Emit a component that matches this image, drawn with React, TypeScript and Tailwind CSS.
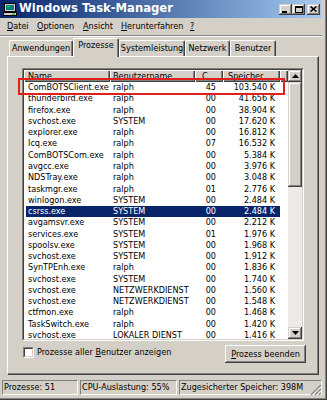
import React from "react";

type Row = [string, string, string, string];

const rows: Row[] = [
  ["ComBOTSClient.exe", "ralph", "45", "103.540 K"],
  ["thunderbird.exe", "ralph", "00", "41.656 K"],
  ["firefox.exe", "ralph", "00", "38.904 K"],
  ["svchost.exe", "SYSTEM", "00", "17.620 K"],
  ["explorer.exe", "ralph", "00", "16.812 K"],
  ["Icq.exe", "ralph", "07", "16.532 K"],
  ["ComBOTSCom.exe", "ralph", "00", "5.384 K"],
  ["avgcc.exe", "ralph", "00", "3.976 K"],
  ["NDSTray.exe", "ralph", "00", "3.048 K"],
  ["taskmgr.exe", "ralph", "01", "2.776 K"],
  ["winlogon.exe", "SYSTEM", "00", "2.484 K"],
  ["csrss.exe", "SYSTEM", "00", "2.484 K"],
  ["avgamsvr.exe", "SYSTEM", "00", "2.212 K"],
  ["services.exe", "SYSTEM", "01", "1.976 K"],
  ["spoolsv.exe", "SYSTEM", "00", "1.968 K"],
  ["svchost.exe", "SYSTEM", "00", "1.912 K"],
  ["SynTPEnh.exe", "ralph", "00", "1.836 K"],
  ["svchost.exe", "SYSTEM", "00", "1.740 K"],
  ["svchost.exe", "NETZWERKDIENST", "00", "1.560 K"],
  ["svchost.exe", "NETZWERKDIENST", "00", "1.548 K"],
  ["ctfmon.exe", "ralph", "00", "1.468 K"],
  ["TaskSwitch.exe", "ralph", "00", "1.420 K"],
  ["svchost.exe", "LOKALER DIENST", "00", "1.416 K"],
];

const SEL = 11;

function U({ c }: { c: string }) {
  return <span className="underline decoration-1 underline-offset-[1px]">{c}</span>;
}

const raised =
  "bg-[#d4d0c8] shadow-[inset_-1px_-1px_0_#404040,inset_1px_1px_0_#d4d0c8,inset_-2px_-2px_0_#808080,inset_2px_2px_0_#ffffff]";

function TitleBtn({ children }: { children: React.ReactNode }) {
  return (
    <div className={`w-[13px] h-[11px] flex items-center justify-center ${raised}`}>
      {children}
    </div>
  );
}

function Tab({ label, w, sel }: { label: string; w: string; sel?: boolean }) {
  if (sel) {
    return (
      <div
        className={`${w} relative z-10 h-[19px] mb-[-1px] bg-[#d4d0c8] border-t border-l border-white border-r border-r-[#404040] rounded-t-[2px] flex items-center justify-center pb-[5px] shadow-[inset_-1px_0_0_#808080]`}
      >
        {label}
      </div>
    );
  }
  return (
    <div
      className={`${w} h-[16px] bg-[#d4d0c8] border-t border-l border-white border-r border-r-[#404040] rounded-t-[2px] flex items-center justify-center shadow-[inset_-1px_0_0_#808080]`}
    >
      {label}
    </div>
  );
}

function Arrow({ up }: { up?: boolean }) {
  return (
    <svg width="7" height="4" viewBox="0 0 7 4">
      {up ? <polygon points="0,4 7,4 3.5,0" fill="#000" /> : <polygon points="0,0 7,0 3.5,4" fill="#000" />}
    </svg>
  );
}

export default function App() {
  return (
    <div className="relative w-[327px] h-[400px] overflow-hidden bg-[#d4d0c8] font-['DejaVu_Sans_Condensed','Liberation_Sans',sans-serif] text-black text-[9px] leading-none shadow-[inset_-1px_-1px_0_#404040,inset_-2px_-2px_0_#808080]">
      <div className="flex flex-col w-[322px]">
        {/* Title bar */}
        <div className="h-[18px] flex items-center bg-linear-to-r from-[#0a246a] to-[#a6caf0]">
          <svg width="14" height="14" viewBox="0 0 14 14" className="ml-[3px]">
            <rect x="1.5" y="1.5" width="11" height="8" fill="#d4d0c8" stroke="#000" />
            <rect x="3" y="3" width="8" height="5" fill="#008080" />
            <rect x="4" y="4" width="3" height="1" fill="#00ff00" />
            <rect x="0.5" y="10.5" width="13" height="3" fill="#d4d0c8" stroke="#000" />
            <rect x="9" y="11.5" width="3" height="1" fill="#00a000" />
          </svg>
          <span className="ml-[2px] text-white font-bold text-[11.6px] font-['DejaVu_Sans','Liberation_Sans',sans-serif]">
            Windows Task-Manager
          </span>
          <div className="ml-auto mr-[2px] flex items-center">
            <TitleBtn>
              <div className="w-[5px] h-[2px] bg-black mt-[5px] mr-[2px]" />
            </TitleBtn>
            <TitleBtn>
              <div className="w-[8px] h-[7px] border border-black border-t-2" />
            </TitleBtn>
            <div className="w-[2px]" />
            <TitleBtn>
              <svg width="7" height="6" viewBox="0 0 7 6">
                <path d="M0.5 0.5 L6.5 5.5 M6.5 0.5 L0.5 5.5" stroke="#000" strokeWidth="1.6" />
              </svg>
            </TitleBtn>
          </div>
        </div>

        {/* Menu bar */}
        <div className="h-[16px] flex items-center">
          <span className="ml-[7px] w-[30px]">
            <U c="D" />atei
          </span>
          <span className="w-[46px]">
            <U c="O" />ptionen
          </span>
          <span className="w-[38px]">
            <U c="A" />nsicht
          </span>
          <span className="w-[69px]">
            <U c="H" />erunterfahren
          </span>
          <span>
            <U c="?" />
          </span>
        </div>

        {/* separator */}
        <div className="mt-[1px] h-[2px] border-t border-t-[#808080] border-b border-b-white" />

        {/* Tabs */}
        <div className="mt-[1px] h-[18px] flex items-end pl-[9px]">
          <Tab label="Anwendungen" w="w-[64px]" />
          <Tab label="Prozesse" w="w-[46px]" sel />
          <Tab label="Systemleistung" w="w-[66px]" />
          <Tab label="Netzwerk" w="w-[45px]" />
          <Tab label="Benutzer" w="w-[46px]" />
        </div>

        {/* Panel */}
        <div className="ml-[7px] w-[312px] h-[319px] border border-t-white border-l-white border-r-[#404040] border-b-[#404040] shadow-[inset_-1px_-1px_0_#808080] pt-[11px] pl-[14px]">
          {/* list box */}
          <div className="w-[282px] h-[273px] border border-t-[#808080] border-l-[#808080] border-r-white border-b-white">
            <div className="w-full h-full border border-t-[#404040] border-l-[#404040] border-r-[#d4d0c8] border-b-[#d4d0c8] bg-white flex">
              <div className="w-[264px] h-full overflow-hidden flex flex-col">
                {/* header */}
                <div className="h-[12px] flex shrink-0">
                  {[
                    ["Name", "w-[86px] pl-[4px]"],
                    ["Benutzername", "w-[85px] pl-[3px]"],
                    ["C", "w-[28px] pl-[7px]"],
                    ["Speicher", "w-[57px] pl-[5px]"],
                    ["", "w-[8px]"],
                  ].map(([t, c], i) => (
                    <div
                      key={i}
                      className={`${c} h-full flex items-center overflow-hidden whitespace-nowrap bg-[#d4d0c8] shadow-[inset_1px_1px_0_#ffffff,inset_-1px_-1px_0_#404040,inset_-2px_-2px_0_#808080]`}
                    >
                      {t}
                    </div>
                  ))}
                </div>
                {/* rows */}
                {rows.map((r, i) => (
                  <div
                    key={i}
                    className={`shrink-0 h-[11.27px] ml-[2px] w-[254px] flex items-center whitespace-nowrap ${
                      i === SEL ? "bg-[#0a246a] text-white" : ""
                    }`}
                  >
                    <div className="w-[84px] pl-[2px]">{r[0]}</div>
                    <div className="w-[85px] pl-[3px]">{r[1]}</div>
                    <div className="w-[28px] pr-[7px] text-right">{r[2]}</div>
                    <div className="w-[57px] pr-[5px] text-right">{r[3]}</div>
                  </div>
                ))}
              </div>
              {/* scrollbar */}
              <div className="w-[14px] h-full flex flex-col">
                <div className={`h-[12px] flex items-center justify-center ${raised}`}>
                  <Arrow up />
                </div>
                <div className={`h-[105px] ${raised}`} />
                <div className="flex-1 bg-[#ecebe7]" />
                <div className={`h-[12px] flex items-center justify-center ${raised}`}>
                  <Arrow />
                </div>
              </div>
            </div>
          </div>

          {/* bottom row */}
          <div className="mt-[4px] w-[284px] flex justify-between items-start">
            <div className="mt-[2px] ml-[1px] flex items-center">
              <div className="w-[11px] h-[11px] border border-t-[#808080] border-l-[#808080] border-r-white border-b-white">
                <div className="w-full h-full bg-white border border-t-[#404040] border-l-[#404040] border-r-[#d4d0c8] border-b-[#d4d0c8]" />
              </div>
              <span className="ml-[3px]">
                Prozesse aller <U c="B" />enutzer anzeigen
              </span>
            </div>
            <div
              className={`w-[81px] h-[18px] flex items-center justify-center bg-[#d4d0c8] shadow-[inset_-1px_-1px_0_#404040,inset_1px_1px_0_#ffffff,inset_-2px_-2px_0_#808080,inset_2px_2px_0_#d4d0c8]`}
            >
              <span>
                <U c="P" />rozess beenden
              </span>
            </div>
          </div>
        </div>

        {/* Status bar */}
        <div className="mt-[5px] h-[15px] flex relative">
          <div className="ml-[2px] w-[76px] h-full flex items-center pl-[1px] border border-t-[#808080] border-l-[#808080] border-r-white border-b-white">
            Prozesse: 51
          </div>
          <div className="ml-[2px] w-[97px] h-full flex items-center pl-[1px] border border-t-[#808080] border-l-[#808080] border-r-white border-b-white">
            CPU-Auslastung: 55%
          </div>
          <div className="ml-[2px] w-[143px] h-full flex items-center pl-[1px] border border-t-[#808080] border-l-[#808080] border-r-white border-b-white">
            Zugesicherter Speicher: 398M
          </div>
          <svg width="12" height="12" viewBox="0 0 12 12" className="absolute right-[0px] bottom-[-1px]">
            <path d="M11 1 L1 11 M11 5 L5 11 M11 9 L9 11" stroke="#808080" strokeWidth="1.2" />
            <path d="M11 2.5 L2.5 11 M11 6.5 L6.5 11 M11 10.5 L10.5 11" stroke="#ffffff" strokeWidth="0.8" />
          </svg>
        </div>
      </div>

      {/* red highlight box */}
      <div className="absolute left-[18px] top-[78px] w-[267px] h-[17px] border-2 border-[#e0201c]" />
    </div>
  );
}
